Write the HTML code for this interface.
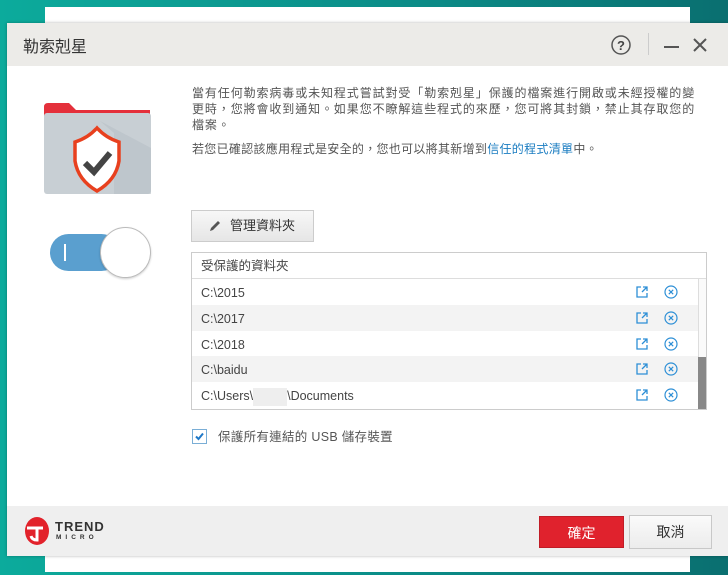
<!DOCTYPE html>
<html><head><meta charset="utf-8"><style>
*{margin:0;padding:0;box-sizing:border-box}
body{width:728px;height:575px;overflow:hidden;position:relative;background:linear-gradient(90deg,#0cab9c,#0b8a86 60%,#0a6f70);font-family:"Liberation Sans","Noto Sans CJK TC",sans-serif;}
.back{position:absolute;left:45px;top:7px;width:645px;height:565px;background:#fff}
.dlg{position:absolute;left:7px;top:23px;width:721px;height:533px;background:#fff;box-shadow:0 0 3px rgba(0,0,0,.3)}
.tb{height:43px;background:#ecebe8;position:relative}
.tb .t{position:absolute;left:16px;top:10px;font-size:16px;color:#333}
.ft{position:absolute;left:0;bottom:0;width:100%;height:50px;background:#efefef}
.p{position:absolute;font-size:12px;color:#555;line-height:16px;letter-spacing:0.9px}
.row{height:25.8px;line-height:28px;padding-left:9px;font-size:12.5px;color:#444;position:relative}
.row:nth-child(even){background:#f3f3f3}
.ic{position:absolute;top:7px;width:12px;height:12px}
</style></head><body>
<div class="back"></div>
<div class="dlg">
 <div class="tb"><div class="t">勒索剋星</div>
  <svg style="position:absolute;left:604px;top:12px" width="20" height="20"><circle cx="10" cy="10" r="9" fill="none" stroke="#555" stroke-width="1.5"/><text x="10" y="15" font-size="13" text-anchor="middle" fill="#444" font-family="Liberation Sans" font-weight="bold">?</text></svg>
  <div style="position:absolute;left:641px;top:10px;width:1px;height:22px;background:#ccc"></div>
  <div style="position:absolute;left:657px;top:23px;width:15px;height:2px;background:#555"></div>
  <svg style="position:absolute;left:686px;top:15px" width="14" height="14"><path d="M1 1L13 13M13 1L1 13" stroke="#555" stroke-width="2"/></svg>
 </div>
 <svg style="position:absolute;left:37px;top:80px" width="108" height="92">
  <path d="M0 4Q0 0 4 0H25L32 7H106V22H0Z" fill="#e4303b"/>
  <rect x="0" y="10" width="107" height="81" rx="3" fill="#c8cfd4"/>
  <path d="M56 18L70 30V91H107V45Z" fill="#b8c0c6" opacity=".6"/>
  <path d="M31 39Q44 35 53 25Q62 35 75 39V58Q72 77 53 88Q34 77 31 58Z" fill="#fff" stroke="#e8401e" stroke-width="3.5"/>
  <path d="M41 60L50 69L66 50" fill="none" stroke="#444" stroke-width="6"/>
 </svg>
 <div style="position:absolute;left:43px;top:211px;width:70px;height:37px;border-radius:19px;background:#5a9fcf"></div>
 <div style="position:absolute;left:57px;top:221px;width:2px;height:17px;background:#fff"></div>
 <div style="position:absolute;left:93px;top:204px;width:51px;height:51px;border-radius:50%;background:#fff;border:1px solid #bbb;box-shadow:0 1px 2px rgba(0,0,0,.2)"></div>
 <div class="p" style="left:185px;top:62px;width:512px">當有任何勒索病毒或未知程式嘗試對受「勒索剋星」保護的檔案進行開啟或未經授權的變更時，您將會收到通知。如果您不瞭解這些程式的來歷，您可將其封鎖，禁止其存取您的檔案。</div>
 <div class="p" style="left:185px;top:118px;letter-spacing:0.3px">若您已確認該應用程式是安全的，您也可以將其新增到<span style="color:#1a7cc1">信任的程式清單</span>中。</div>
 <div style="position:absolute;left:184px;top:187px;width:123px;height:32px;background:linear-gradient(#f7f7f7,#e6e6e6);border:1px solid #ccc;font-size:13px;color:#333;line-height:30px;padding-left:38px">管理資料夾
  <svg style="position:absolute;left:16px;top:8px" width="14" height="14"><path d="M2 12L3 9L10 2L12 4L5 11Z" fill="#555"/></svg></div>
 <div style="position:absolute;left:184px;top:229px;width:516px;height:158px;border:1px solid #ccc">
  <div style="height:26px;line-height:26px;padding-left:9px;font-size:12.5px;color:#444;border-bottom:1px solid #ddd">受保護的資料夾</div>
  <div>
   <div class="row">C:\2015<svg class="ic" style="left:444px" viewBox="0 0 12 12"><path d="M5 1H1V11H11V7M7 1H11V5M11 1L6 6" fill="none" stroke="#2d8fd6" stroke-width="1.3"/></svg><svg class="ic" style="left:472px;width:14px;height:14px;top:6px" viewBox="0 0 14 14"><circle cx="7" cy="7" r="6" fill="none" stroke="#2d8fd6" stroke-width="1.2"/><path d="M4.8 4.8L9.2 9.2M9.2 4.8L4.8 9.2" stroke="#2d8fd6" stroke-width="1.2"/></svg></div>
   <div class="row">C:\2017<svg class="ic" style="left:444px" viewBox="0 0 12 12"><path d="M5 1H1V11H11V7M7 1H11V5M11 1L6 6" fill="none" stroke="#2d8fd6" stroke-width="1.3"/></svg><svg class="ic" style="left:472px;width:14px;height:14px;top:6px" viewBox="0 0 14 14"><circle cx="7" cy="7" r="6" fill="none" stroke="#2d8fd6" stroke-width="1.2"/><path d="M4.8 4.8L9.2 9.2M9.2 4.8L4.8 9.2" stroke="#2d8fd6" stroke-width="1.2"/></svg></div>
   <div class="row">C:\2018<svg class="ic" style="left:444px" viewBox="0 0 12 12"><path d="M5 1H1V11H11V7M7 1H11V5M11 1L6 6" fill="none" stroke="#2d8fd6" stroke-width="1.3"/></svg><svg class="ic" style="left:472px;width:14px;height:14px;top:6px" viewBox="0 0 14 14"><circle cx="7" cy="7" r="6" fill="none" stroke="#2d8fd6" stroke-width="1.2"/><path d="M4.8 4.8L9.2 9.2M9.2 4.8L4.8 9.2" stroke="#2d8fd6" stroke-width="1.2"/></svg></div>
   <div class="row">C:\baidu<svg class="ic" style="left:444px" viewBox="0 0 12 12"><path d="M5 1H1V11H11V7M7 1H11V5M11 1L6 6" fill="none" stroke="#2d8fd6" stroke-width="1.3"/></svg><svg class="ic" style="left:472px;width:14px;height:14px;top:6px" viewBox="0 0 14 14"><circle cx="7" cy="7" r="6" fill="none" stroke="#2d8fd6" stroke-width="1.2"/><path d="M4.8 4.8L9.2 9.2M9.2 4.8L4.8 9.2" stroke="#2d8fd6" stroke-width="1.2"/></svg></div>
   <div class="row">C:\Users\<span style="display:inline-block;width:34px;height:18px;background:#eee;vertical-align:middle"></span>\Documents<svg class="ic" style="left:444px" viewBox="0 0 12 12"><path d="M5 1H1V11H11V7M7 1H11V5M11 1L6 6" fill="none" stroke="#2d8fd6" stroke-width="1.3"/></svg><svg class="ic" style="left:472px;width:14px;height:14px;top:6px" viewBox="0 0 14 14"><circle cx="7" cy="7" r="6" fill="none" stroke="#2d8fd6" stroke-width="1.2"/><path d="M4.8 4.8L9.2 9.2M9.2 4.8L4.8 9.2" stroke="#2d8fd6" stroke-width="1.2"/></svg></div>
  </div>
  <div style="position:absolute;right:0;top:26px;width:8px;height:130px;background:#fafafa;border-left:1px solid #ddd"></div>
  <div style="position:absolute;right:0;top:104px;width:8px;height:52px;background:#888"></div>
 </div>
 <div style="position:absolute;left:185px;top:406px;width:15px;height:15px;border:1px solid #7aaed6;background:#fff"><svg width="13" height="13" style="position:absolute;left:0;top:0"><path d="M3 6.5L5.5 9L10 3.5" fill="none" stroke="#1e78c8" stroke-width="2"/></svg></div>
 <div class="p" style="left:211px;top:406px;font-size:12.5px;letter-spacing:0.3px">保護所有連結的 USB 儲存裝置</div>
 <div class="ft">
  <svg style="position:absolute;left:16px;top:10px" width="28" height="30"><ellipse cx="14" cy="15" rx="12" ry="14" fill="#e2222b"/><path d="M4 12H20M14 12V24Q9 24 8 20" fill="none" stroke="#fff" stroke-width="3"/></svg>
  <div style="position:absolute;left:48px;top:13px;font-size:13px;font-weight:bold;color:#333;letter-spacing:1px">TREND</div>
  <div style="position:absolute;left:49px;top:28px;font-size:6.5px;font-weight:bold;color:#333;letter-spacing:4px">MICRO</div>
  <div style="position:absolute;left:532px;top:10px;width:85px;height:32px;background:#e0222d;color:#fff;font-size:14px;text-align:center;line-height:32px;border:1px solid #c01c26">確定</div>
  <div style="position:absolute;left:622px;top:9px;width:83px;height:34px;background:linear-gradient(#fafafa,#ececec);color:#333;font-size:14px;text-align:center;line-height:32px;border:1px solid #c8c8c8">取消</div>
 </div>
</div>
</body></html>
